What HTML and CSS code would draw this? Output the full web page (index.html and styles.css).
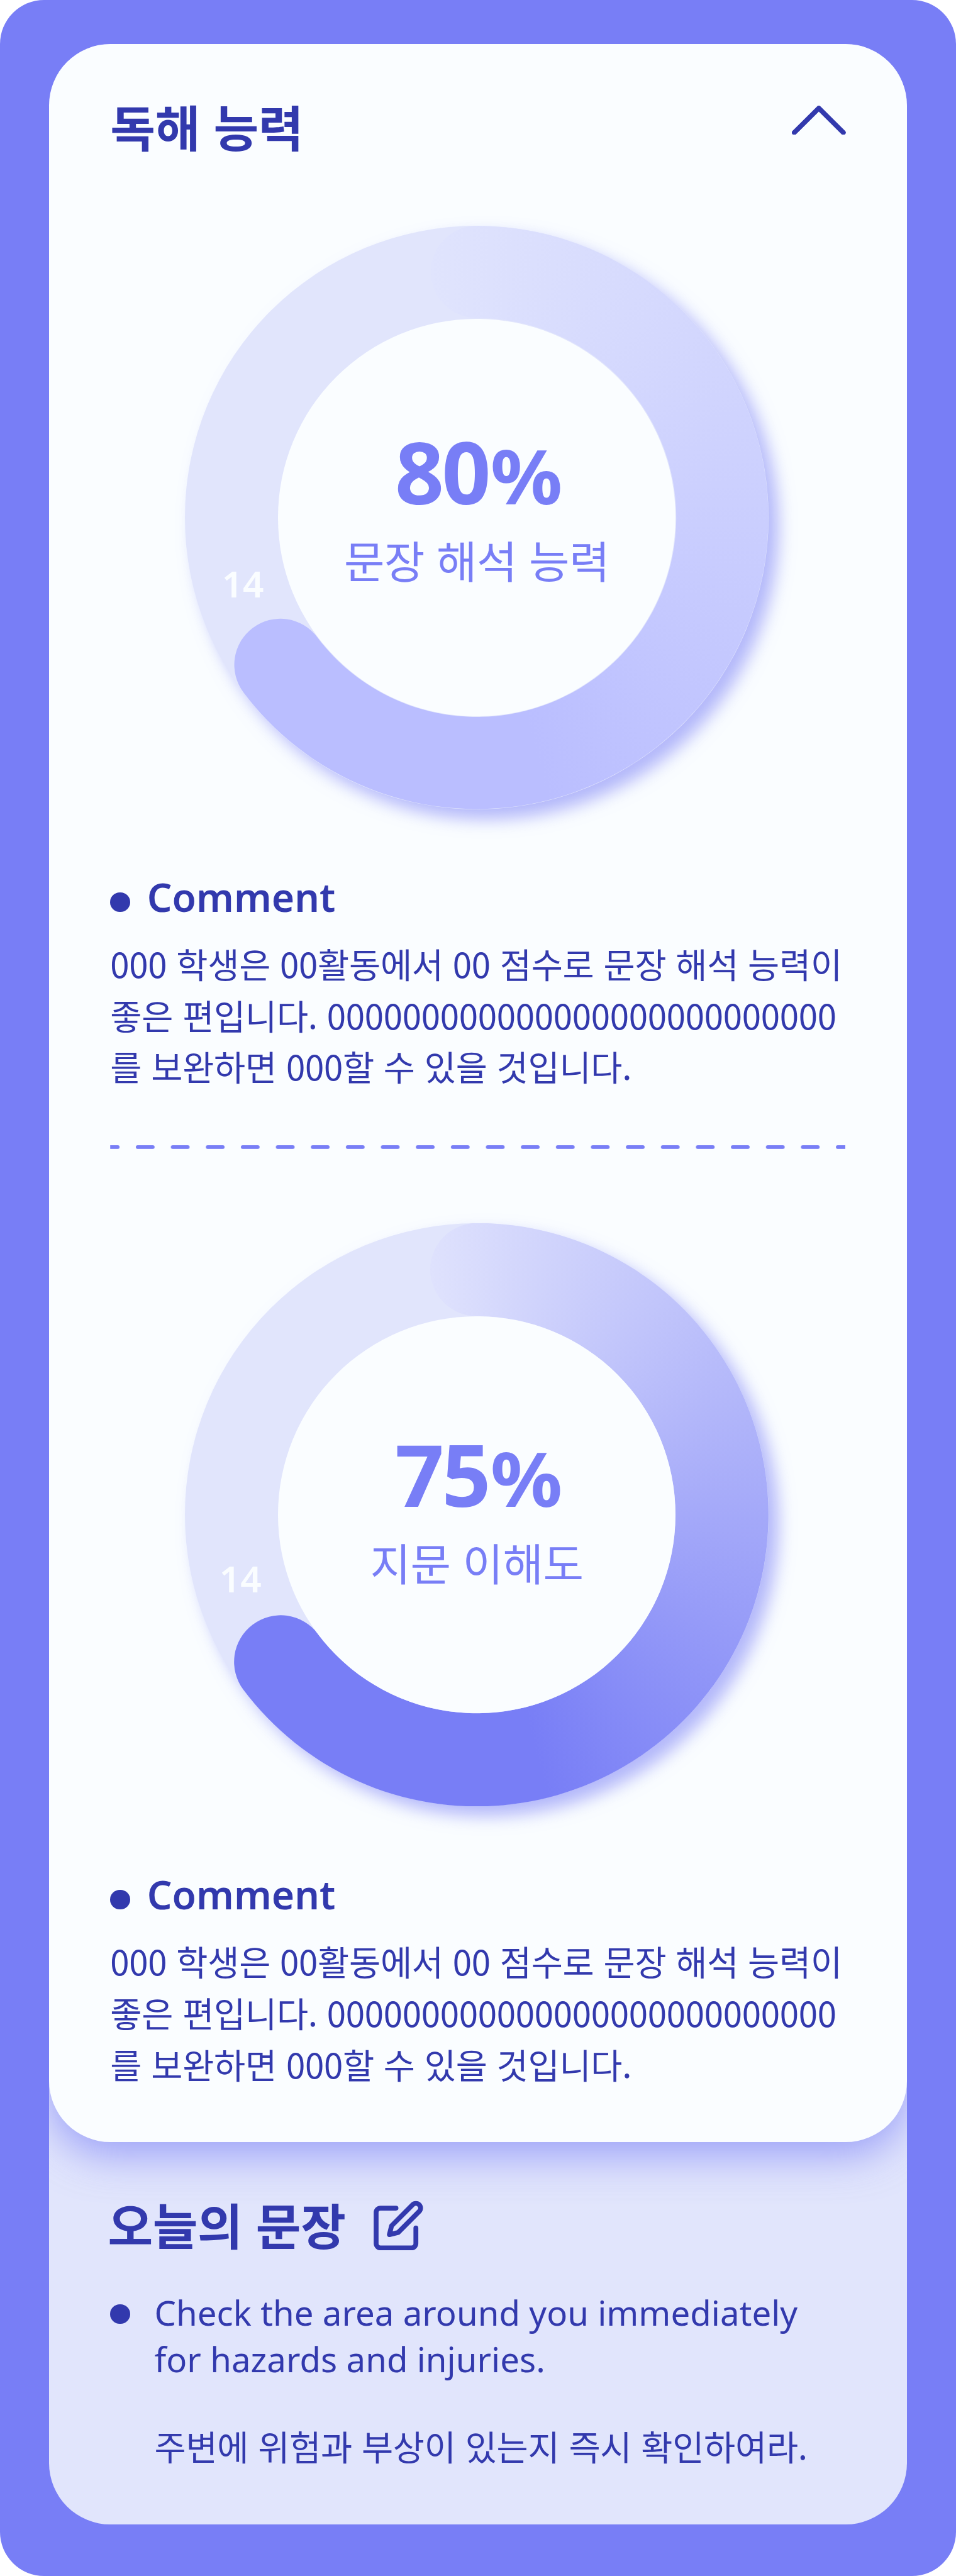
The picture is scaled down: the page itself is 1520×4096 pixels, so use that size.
FILE: index.html
```html
<!DOCTYPE html>
<html lang="ko">
<head>
<meta charset="utf-8">
<title>독해 능력</title>
<link rel="stylesheet" href="styles.css">
</head>
<body>
<svg class="defs" aria-hidden="true">
  <defs>
    <clipPath id="arc" clipPathUnits="objectBoundingBox">
      <path transform="scale(0.00105042)" d="M476 0A476 476 0 1 1 95.2 761.6A76 76 0 0 1 216.8 670.4A324 324 0 1 0 476 152A76 76 0 0 1 476 0Z"/>
    </clipPath>
    <clipPath id="arc-thin" clipPathUnits="objectBoundingBox">
      <path transform="scale(0.00105042)" d="M476 .2A475.8 475.8 0 1 1 95.4 761.5A75 75 0 0 1 215.6 671.3A325.5 325.5 0 1 0 476 150.5A75 75 0 0 1 476 .2Z"/>
    </clipPath>
  </defs>
</svg>
<main class="panel">
  <div class="card">
    <section class="report">
      <header class="report-header">
        <h1 class="title">독해 능력</h1>
        <svg class="chevron" viewBox="0 0 88 48"><path d="M4 44L44 4L84 44"/></svg>
      </header>

      <div class="gauge gauge-soft">
        <div class="arc"></div>
        <div class="hole"></div>
        <span class="tick">14</span>
        <div class="reading">
          <div class="value">80<span class="percent">%</span></div>
          <div class="label">문장 해석 능력</div>
        </div>
      </div>
      <div class="comment">
        <h2 class="comment-title"><i class="dot"></i>Comment</h2>
        <p class="text">000 학생은 00활동에서 00 점수로 문장 해석 능력이<br>좋은 편입니다. 000000000000000000000000000<br>를 보완하면 000할 수 있을 것입니다.</p>
      </div>

      <svg class="divider" viewBox="0 0 1200 6">
        <defs>
          <pattern id="dashes" width="57.1429" height="6" patternUnits="userSpaceOnUse" patternTransform="translate(-28.5714 0)">
            <rect x="13.27" width="30.6" height="6" rx="3"/>
          </pattern>
        </defs>
        <rect width="1200" height="6" fill="url(#dashes)"/>
      </svg>

      <div class="gauge gauge-strong">
        <div class="arc"></div>
        <div class="hole"></div>
        <span class="tick">14</span>
        <div class="reading">
          <div class="value">75<span class="percent">%</span></div>
          <div class="label">지문 이해도</div>
        </div>
      </div>
      <div class="comment">
        <h2 class="comment-title"><i class="dot"></i>Comment</h2>
        <p class="text">000 학생은 00활동에서 00 점수로 문장 해석 능력이<br>좋은 편입니다. 000000000000000000000000000<br>를 보완하면 000할 수 있을 것입니다.</p>
      </div>
    </section>

    <section class="today">
      <header class="today-header">
        <h2 class="title">오늘의 문장</h2>
        <svg class="edit" viewBox="0 0 24 24"><path d="M11 4H4a2 2 0 0 0-2 2v14a2 2 0 0 0 2 2h14a2 2 0 0 0 2-2v-7"/><path d="M18.5 2.5a2.121 2.121 0 0 1 3 3L12 15l-4 1 1-4 9.5-9.5z"/></svg>
      </header>
      <div class="sentence">
        <i class="dot"></i>
        <div>
          <p class="english">Check the area around you immediately<br>for hazards and injuries.</p>
          <p class="text korean">주변에 위험과 부상이 있는지 즉시 확인하여라.</p>
        </div>
      </div>
    </section>
  </div>
</main>
</body>
</html>
```
FILE: styles.css
```css
:root {
  --primary: #787ef6;
  --ink: #3239ad;
  --paper: #fafdff;
  --track: #e1e5fc;
  --latin: "Noto Sans", "Noto Sans CJK KR", sans-serif;
  --korean: "Noto Sans CJK KR", "Noto Sans", sans-serif;
}

/* 1rem is 100 design units */
html { font-size: 97.4359px; }

* { box-sizing: border-box; margin: 0; padding: 0; }

body {
  background: #fff;
  color: var(--ink);
  font-family: var(--korean);
  overflow: hidden;
}

.defs { display: block; width: 0; height: 0; }

.panel {
  width: 15.6rem;
  height: 4096px;
  padding: .72rem .8rem .84rem;
  border-radius: .72rem;
  background: var(--primary);
}

.card {
  height: 100%;
  border-radius: 1rem;
  background: var(--track);
  overflow: hidden;
}

.report {
  height: 34.24rem;
  padding: .76rem 1rem 0;
  border-radius: 1rem;
  background: var(--paper);
  box-shadow: 0 .2rem .68rem rgba(120, 126, 246, .68);
}

.report-header {
  display: flex;
  justify-content: space-between;
  height: 1.16rem;
}

.title { font-size: .8rem; line-height: 1.16rem; font-weight: 700; letter-spacing: -.005em; }

.chevron { width: .88rem; height: .48rem; margin-top: .24rem; }
.chevron path, .edit path {
  fill: none;
  stroke: var(--ink);
  stroke-linecap: round;
  stroke-linejoin: round;
}
.chevron path { stroke-width: 8; }

.gauge {
  position: relative;
  width: 9.52rem;
  height: 9.52rem;
  margin-left: 1.22rem;
  border-radius: 50%;
  background: var(--track);
  box-shadow: .16rem .16rem .27rem rgba(120, 126, 246, .55);
  color: var(--primary);
}
.gauge-soft { margin-top: 1.045rem; --from: #e0e4fd; --to: #babeff; --drop: 0rem; }
.gauge-strong { margin-top: 1.209rem; --from: #dfe2fd; --to: #787ef6; --drop: .08rem; }

.arc {
  position: absolute;
  inset: 0;
  background: conic-gradient(from -11deg, var(--from), var(--to) 177deg 300deg, var(--from) 300deg);
  clip-path: url(#arc);
}
.gauge-soft .arc { clip-path: url(#arc-thin); }

.hole {
  position: absolute;
  inset: 1.52rem;
  border-radius: 50%;
  background: var(--paper);
}

.tick {
  position: absolute;
  left: .6rem;
  top: 5.43rem;
  color: var(--paper);
  font: 600 .6rem/.82rem var(--latin);
}
.gauge-strong .tick { left: .56rem; top: 5.39rem; }

.reading {
  position: relative;
  padding-top: calc(3.09rem + var(--drop));
  text-align: center;
}
.value {
  padding-left: .03rem;
  font: 700 1.4rem/1.84rem var(--latin);
  letter-spacing: -.025em;
}
.percent {
  display: inline-block;
  margin-left: .06rem;
  font-size: 1.23rem;
  line-height: 1;
  letter-spacing: 0;
  transform: scaleX(1.06);
}
.label { font-size: .72rem; line-height: 1.04rem; letter-spacing: -.008em; }

.comment { margin-top: .985rem; }
.gauge-strong + .comment { margin-top: .993rem; }
.comment-title {
  display: flex;
  gap: .28rem;
  font: 600 .64rem/.88rem var(--latin);
}
.dot {
  flex: none;
  width: .32rem;
  height: .32rem;
  border-radius: 50%;
  background: var(--ink);
}
.comment-title .dot { margin-top: .37rem; }
.text { font-size: .56rem; line-height: .84rem; letter-spacing: -.005em; white-space: nowrap; }
.comment .text { margin-top: .23rem; }

.divider {
  display: block;
  width: 12rem;
  height: .06rem;
  margin-top: .871rem;
  fill: var(--primary);
}

.today { padding: .757rem 1rem 0; }
.today-header { display: flex; gap: .43rem; }
.today .title { margin-left: -.04rem; }
.edit { width: .865rem; height: .865rem; margin-top: .175rem; overflow: visible; }
.edit path { stroke-width: 2.2; }

.sentence { display: flex; gap: .4rem; margin-top: .48rem; }
.sentence .dot { margin-top: .245rem; }
.english { font: 400 .56rem/.763rem var(--latin); letter-spacing: .001em; white-space: nowrap; }
.korean { margin-top: .612rem; }
```
